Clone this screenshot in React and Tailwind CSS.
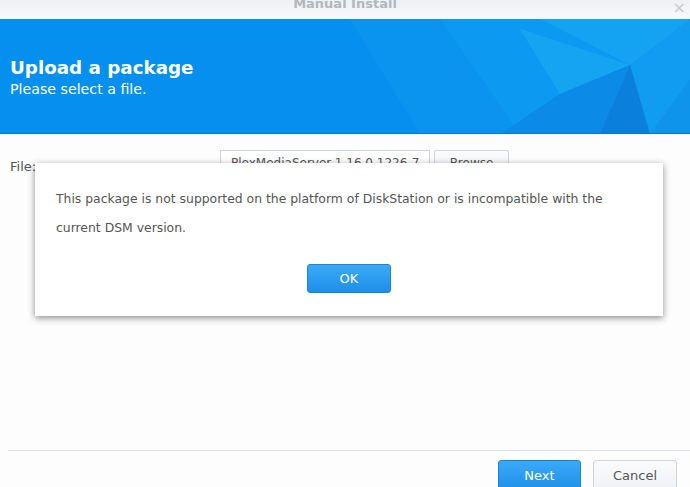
export default function App() {
  return (
    <div className="relative w-[690px] h-[487px] overflow-hidden bg-[#fdfdfd] font-['DejaVu_Sans',sans-serif]">
      {/* title bar */}
      <div className="relative h-[19px] bg-gradient-to-b from-[#eef1f4] to-[#f7f8fa] flex justify-center">
        <span className="mt-[-6px] text-[13px] font-bold text-[#b3b8bd]">Manual Install</span>
        <span className="absolute right-[4px] top-[-4px] text-[16px] text-[#c8ccd0]">×</span>
      </div>

      {/* blue banner */}
      <div className="relative h-[115px] bg-[#0590ef] border-b border-[#0a78cf] overflow-hidden">
        <svg className="absolute inset-0" width="690" height="115" viewBox="0 0 690 115">
          <polygon points="350,0 690,0 690,115 420,115" fill="#0a94f0" />
          <polygon points="440,0 690,0 690,115 520,115" fill="#0c99f1" />
          <polygon points="540,0 690,0 690,40 630,46" fill="#14a2f2" />
          <polygon points="520,10 630,46 560,75" fill="#18a6f2" opacity="0.8" />
          <polygon points="630,46 690,0 690,115 650,115" fill="#109cf0" />
          <polygon points="560,75 630,46 600,115 500,115" fill="#0b8ae6" />
          <polygon points="630,46 650,115 600,115" fill="#0a80dc" />
          <polygon points="650,115 690,60 690,115" fill="#0f94ec" />
        </svg>
        <div className="relative pl-[10px] pt-[38px] text-white">
          <div className="text-[18.3px] font-bold leading-[22px]">Upload a package</div>
          <div className="text-[14.2px] leading-[18px] mt-[1px]">Please select a file.</div>
        </div>
      </div>

      {/* body */}
      <div className="flex items-start px-[10px] pt-[16px]">
        <span className="text-[13px] text-[#555] mt-[7px] w-[210px]">File:</span>
        <div className="w-[210px] h-[26px] border border-[#cfd4d9] bg-white pl-[10px] text-[12px] text-[#555] leading-[24px] overflow-hidden whitespace-nowrap">
          PlexMediaServer-1.16.0.1226-7
        </div>
        <div className="ml-[4px] w-[75px] h-[26px] border border-[#cfd4d9] rounded-[2px] bg-gradient-to-b from-[#fbfcfd] to-[#eef1f4] text-center text-[12px] text-[#555] leading-[24px]">
          Browse
        </div>
      </div>

      {/* footer */}
      <div className="absolute left-[8px] right-0 top-[450px] border-t border-[#dde1e5]" />
      <div className="absolute top-[460px] right-[13px] flex gap-[12px]">
        <div className="w-[83px] h-[32px] rounded-[3px] border border-[#1b83d9] bg-gradient-to-b from-[#3aa9f6] to-[#1d8fe9] text-center text-white text-[13px] leading-[30px]">
          Next
        </div>
        <div className="w-[84px] h-[32px] rounded-[3px] border border-[#cfd4d9] bg-gradient-to-b from-[#fafbfc] to-[#eef1f4] text-center text-[#555] text-[13px] leading-[30px]">
          Cancel
        </div>
      </div>

      {/* modal */}
      <div className="absolute left-[35px] top-[163px] w-[628px] h-[153px] bg-white shadow-[0_2px_7px_rgba(0,0,0,0.45)] flex flex-col">
        <div className="pl-[21px] pt-[21px] pr-[20px] text-[12.4px] leading-[29px] text-[#555]">
          This package is not supported on the platform of DiskStation or is incompatible with the current DSM version.
        </div>
        <div className="flex justify-center mt-[22px]">
          <div className="w-[84px] h-[29px] rounded-[3px] border border-[#1b83d9] bg-gradient-to-b from-[#3aa9f6] to-[#1d8fe9] text-center text-white text-[13px] leading-[27px]">
            OK
          </div>
        </div>
      </div>
    </div>
  );
}
